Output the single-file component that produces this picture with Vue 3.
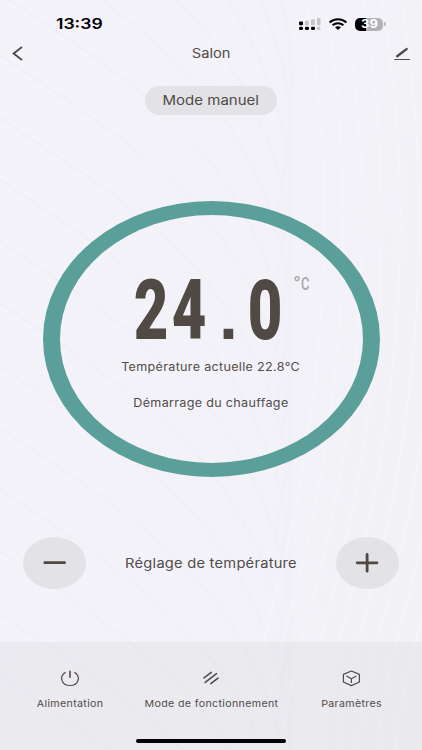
<script setup>
import { ref, computed } from 'vue'

const target = ref(24)
const current = ref('22.8')

const digits = computed(() => target.value.toFixed(1).split(''))

function step(delta) {
  target.value = Math.min(35, Math.max(5, target.value + delta))
}

// Faint contour lines behind the whole screen.
const waves = Array.from({ length: 17 }, (_, i) => {
  const y = -330 + i * 62
  return `M-20 ${y} C 90 ${y + 75}, 190 ${y + 130}, 245 ${y + 235} S 300 ${y + 420}, 275 ${y + 560}`
})
const ripples = Array.from({ length: 9 }, (_, i) => {
  const x = 305 + i * 19
  return `M${x} -10 C ${x + 22} 130, ${x + 28} 260, ${x + 4} 430 S ${x - 55} 650, ${x - 62} 760`
})
</script>

<template>
  <div class="screen">
    <svg class="backdrop" viewBox="0 0 422 750" aria-hidden="true">
      <path v-for="d in waves" :key="d" :d="d" />
      <path v-for="d in ripples" :key="d" :d="d" class="thin" />
    </svg>

    <div class="status">
      <span class="time"><span class="wide">13:39</span></span>
      <div class="status-icons">
        <svg width="22" height="14" viewBox="0 0 22 14">
          <g fill="#000">
            <rect x="0" y="4.6" width="4" height="3.6" rx="1" />
            <rect x="0" y="9.7" width="4" height="3.4" rx="1.4" />
            <rect x="6" y="9.7" width="4" height="3.4" rx="1.4" />
            <rect x="12" y="9.7" width="4" height="3.4" rx="1.4" />
          </g>
          <g fill="#c4c3c8">
            <rect x="6" y="3.7" width="3.8" height="4.6" rx="1" />
            <rect x="12" y="2.2" width="3.8" height="6.1" rx="1" />
            <rect x="17.9" y="1" width="3.6" height="7.3" rx="1" />
            <rect x="17.9" y="9.7" width="3.6" height="3.4" rx="1.4" />
          </g>
        </svg>
        <svg class="wifi" width="20" height="13" viewBox="0 0 20 13">
          <path d="M1.6 4.5C6.2 .2 13.8 .2 18.4 4.5" />
          <path d="M4.6 7.3C7.6 4.5 12.4 4.5 15.4 7.3" />
          <path d="M7 9.2C8.8 7.8 11.2 7.8 13 9.2L10 11.9Z" class="dot" />
        </svg>
        <div class="battery">
          <span class="wide">39</span>
        </div>
      </div>
    </div>

    <header class="head">
      <button class="icon-btn" aria-label="Retour">
        <svg width="18" height="16" viewBox="0 0 18 16">
          <path d="M11 .9L2.6 7.5L11 14.1" stroke-width="1.9" />
        </svg>
      </button>
      <h1><span class="wide">Salon</span></h1>
      <button class="icon-btn" aria-label="Modifier">
        <svg width="18" height="14" viewBox="0 0 18 14">
          <path d="M4.2 9.3L11.7 3.6" stroke-width="2.5" stroke-linecap="round" />
          <path d="M13.1 2.5L13.7 2" stroke-width="2.3" stroke-linecap="round" />
          <path d="M1.3 12.5H17" stroke-width="1" />
        </svg>
      </button>
    </header>

    <div class="mode"><span class="wide">Mode manuel</span></div>

    <main class="dial">
      <div class="reading">
        <span v-for="(c, i) in digits" :key="i" class="cell"><span class="glyph" :class="{ point: c === '.' }">{{ c }}</span></span>
        <span class="unit"><i class="degree">°</i><span class="narrow">C</span></span>
      </div>
      <p class="current"><span class="wide">Température actuelle {{ current }}°C</span></p>
      <p class="state"><span class="wide">Démarrage du chauffage</span></p>
    </main>

    <div class="controls">
      <button class="round" aria-label="Diminuer" @click="step(-0.5)">
        <svg width="24" height="20" viewBox="0 0 24 20"><path d="M1.8 9.7H21.6" /></svg>
      </button>
      <span class="caption"><span class="wide">Réglage de température</span></span>
      <button class="round" aria-label="Augmenter" @click="step(0.5)">
        <svg width="24" height="20" viewBox="0 0 24 20"><path d="M2.2 9.8H22M12.1 1.4V18.2" /></svg>
      </button>
    </div>

    <nav class="tabs">
      <a class="tab">
        <svg width="20" height="18" viewBox="0 0 20 18">
          <path d="M5.7 3.2C-1.2 7.2 1.2 16.5 10 16.5S21.2 7.2 14.3 3.2" stroke-width="1.2" />
          <path d="M10 1.7V8.7" stroke-width="1.6" />
        </svg>
        <span class="wide">Alimentation</span>
      </a>
      <a class="tab">
        <svg width="20" height="18" viewBox="0 0 20 18" stroke-width="1.6" stroke-linecap="round">
          <path d="M3 8.9L10.3 3.4M4.2 13.4L15.5 4.7M9.8 14.6L17 9.1" />
        </svg>
        <span class="wide">Mode de fonctionnement</span>
      </a>
      <a class="tab">
        <svg width="20" height="18" viewBox="0 0 20 18" stroke-width="1.2" stroke-linejoin="round">
          <path d="M9.4 2L17.4 5.4V13L9.4 16.6L1.4 13V5.4Z" />
          <path d="M4.4 7L9.4 9.7L14.4 7M9.4 9.7V14" />
        </svg>
        <span class="wide">Paramètres</span>
      </a>
      <i class="home-bar" />
    </nav>
  </div>
</template>

<style>
body { margin: 0; background: #f3f2f8; }
</style>

<style scoped>
.screen {
  position: relative;
  box-sizing: border-box;
  width: 422px; height: 750px;
  display: flex; flex-direction: column; align-items: center;
  overflow: hidden;
  background: linear-gradient(100deg, #f4f3f9, #f3f2f8 60%, #f1f1f6);
  color: #514c49;
  font-family: Inter, Roboto, sans-serif;
}
.screen > :not(.backdrop) { position: relative; }
.backdrop { position: absolute; inset: 0; width: 422px; height: 750px; fill: none; stroke: #f1f0f6; stroke-width: 3; }
.backdrop .thin { stroke: #f4f4f9; stroke-width: 2; }
.wide { display: inline-block; white-space: nowrap; transform: scaleX(1.13); }
button { border: 0; padding: 0; background: none; color: inherit; display: flex; align-items: center; justify-content: center; }
svg { display: block; flex: none; fill: none; stroke: currentColor; }

.status {
  box-sizing: border-box; width: 100%; height: 38px;
  padding: 10px 39px 0 56px;
  display: flex; justify-content: space-between; align-items: center;
  color: #000;
}
.time { font-size: 14.3px; font-weight: 600; line-height: 20px; }
.time .wide { transform: scaleX(1.23); transform-origin: left; }
.status-icons { display: flex; align-items: center; gap: 7px; }
.status-icons svg { stroke: none; }
.status-icons .wifi { stroke: #000; stroke-width: 2.1; }
.wifi .dot { fill: #000; stroke: none; }
.battery {
  position: relative;
  width: 28px; height: 13px; border-radius: 5px;
  background: linear-gradient(90deg, #000 39%, #b2b1b5 39%);
  color: #fff; font-size: 11.5px; font-weight: 700; line-height: 13px; text-align: center;
}
.battery::after {
  content: ''; position: absolute; right: -2.5px; top: 4.5px;
  width: 1.5px; height: 4px; border-radius: 0 2px 2px 0; background: #b2b1b5;
}

.head {
  box-sizing: border-box; width: 100%; height: 31px; padding: 0 11px;
  display: flex; align-items: center; justify-content: space-between;
}
h1 { margin: 0; font-size: 13px; font-weight: 400; line-height: 20px; padding-bottom: 1px; }

.mode {
  width: 132px; height: 29px; margin-top: 17px; border-radius: 15px;
  background: #e3e2e7;
  font-size: 13px; line-height: 29px; text-align: center;
}
.mode .wide { transform: scaleX(1.155); }

.dial {
  box-sizing: border-box; width: 337px; height: 276px; margin-top: 86px;
  border: solid #5b9f9b; border-width: 14px 17px; border-radius: 50%;
  display: flex; flex-direction: column; align-items: center;
}
.reading { position: relative; display: flex; height: 84px; margin-top: 54px; margin-right: 6px; color: #514943; }
.cell { width: 38px; display: flex; justify-content: center; }
.glyph { font: 900 83px/84px Roboto, sans-serif; transform: scaleX(.72); }
.glyph.point { font: 700 68px/93px "Liberation Sans", sans-serif; padding-left: 3px; transform: none; }
.unit {
  position: absolute; left: 161px; top: 4px;
  display: flex; color: #aaa8ab; font: 500 19px/22px Roboto, sans-serif;
}
.degree { font-style: normal; font-size: 21px; width: 8px; }
.narrow { transform: scaleX(.68); transform-origin: left; }
.dial p { margin: 0; font-size: 11.3px; line-height: 16px; letter-spacing: .3px; }
.dial p .wide { transform: scaleX(1.11); }
.dial .current { margin-top: 6px; }
.dial .state { margin-top: 20px; }

.controls {
  box-sizing: border-box; width: 100%; padding: 0 23px; margin-top: 60px;
  display: flex; align-items: center; justify-content: space-between;
}
.round { width: 63px; height: 52px; border-radius: 50%; background: #e3e2e7; }
.round path { stroke: #514845; stroke-width: 2.8; stroke-linecap: round; }
.caption { font-size: 13px; letter-spacing: .2px; }

.tabs {
  box-sizing: border-box; width: 100%; height: 108px; margin-top: auto; padding-top: 27px;
  display: grid; grid-template-columns: repeat(3, 1fr); align-items: start;
  background: rgba(222, 220, 225, .36);
}
.tab { display: flex; flex-direction: column; align-items: center; gap: 10px; font-size: 9.3px; line-height: 14px; letter-spacing: .3px; }
.tab .wide { transform: scaleX(1.145); }
.home-bar { position: absolute; left: 136px; bottom: 7px; width: 150px; height: 4px; border-radius: 2px; background: #000; }
</style>
